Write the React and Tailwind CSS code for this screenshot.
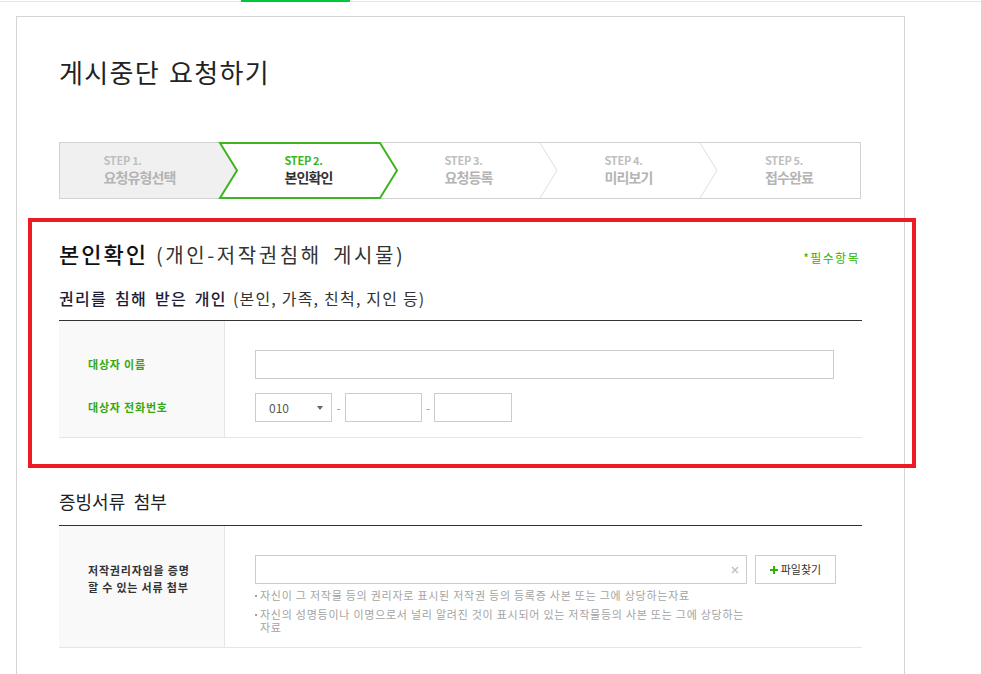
import React from 'react';

const FONT = "font-['Noto_Sans_CJK_KR','Noto_Sans',sans-serif]";

const steps = [
  { no: 'STEP 1.', label: '요청유형선택', w: 'w-[161px]' },
  { no: 'STEP 2.', label: '본인확인', w: 'w-[160px] pl-[17px]', active: true },
  { no: 'STEP 3.', label: '요청등록', w: 'w-[160px] pl-[17px]' },
  { no: 'STEP 4.', label: '미리보기', w: 'w-[160px] pl-[17px]' },
  { no: 'STEP 5.', label: '접수완료', w: 'w-[161px] pl-[17px]' },
];

function StepBar() {
  return (
    <div className="relative h-[57px] w-[802px]">
      {/* chevron drawing behind the labels */}
      <svg className="absolute inset-0" width="802" height="57" viewBox="0 0 802 57">
        <rect x="0.5" y="0.5" width="801" height="56" fill="#fff" stroke="#d2d2d2" />
        <polygon points="1,1 161,1 178,28.5 161,56 1,56" fill="#f0f0f0" />
        <polyline points="481,1 498,28.5 481,56" fill="none" stroke="#dedede" />
        <polyline points="641,1 658,28.5 641,56" fill="none" stroke="#dedede" />
        <polygon
          points="161,1 321,1 338,28.5 321,56 161,56 178,28.5"
          fill="#fff"
          stroke="#3cb521"
          strokeWidth="2"
        />
      </svg>
      <div className="relative flex h-full">
        {steps.map((s) => (
          <div key={s.no} className={`${s.w} flex justify-center pt-[12px]`}>
            <div className="flex flex-col items-start">
              <span
                className={`text-[11px] leading-[13px] font-bold tracking-[-0.3px] ${
                  s.active ? 'text-[#3cb521]' : 'text-[#bfbfbf]'
                }`}
              >
                {s.no}
              </span>
              <span
                className={`mt-[2px] text-[14px] leading-[17px] font-bold tracking-[-0.9px] ${
                  s.active ? 'text-[#333]' : 'text-[#b4b4b4]'
                }`}
              >
                {s.label}
              </span>
            </div>
          </div>
        ))}
      </div>
    </div>
  );
}

function Caret() {
  return (
    <svg width="6" height="4" viewBox="0 0 6 4">
      <polygon points="0,0 6,0 3,4" fill="#666" />
    </svg>
  );
}

function Note({ children }) {
  return (
    <div className="flex w-[495px] text-[11px] leading-[13px] tracking-[0.75px] text-[#a3a3a3]">
      <span className="mr-[3px] mt-[6px] h-[2px] w-[2px] shrink-0 bg-[#a3a3a3]" />
      <p className="w-[490px]">{children}</p>
    </div>
  );
}

export default function App() {
  return (
    <div className={`relative h-[674px] overflow-hidden bg-white ${FONT}`}>
      {/* top nav line with active tab indicator */}
      <div className="relative h-[2px]">
        <div className="absolute left-0 right-0 top-[1px] h-px bg-[#e6e6e6]" />
        <div className="absolute left-[241px] top-0 h-[2px] w-[109px] bg-[#00c73c]" />
      </div>

      <div className="ml-[16px] mt-[14px] w-[889px] border border-[#d5d5d5] px-[42px] pt-[40px] pb-[60px]">
        <h1 className="text-[26px] leading-[30px] font-normal tracking-[1.3px] text-[#222] [word-spacing:2px]">
          게시중단 요청하기
        </h1>

        <div className="mt-[55px]">
          <StepBar />
        </div>

        {/* 본인확인 */}
        <div className="mt-[40px] flex h-[28px] items-end justify-between">
          <h2 className="flex h-[28px] items-baseline">
            <span className="text-[22px] leading-[28px] font-medium tracking-[2px] text-[#111]">본인확인</span>
            <span className="ml-[8px] text-[20px] leading-[28px] tracking-[2.6px] text-[#333] [word-spacing:4px]">
              (개인-저작권침해 게시물)
            </span>
          </h2>
          <span className="mb-px mr-[2px] text-[12px] leading-[16px] tracking-[1.4px] text-[#2db400]">*필수항목</span>
        </div>
        <h3 className="mt-[21px] h-[20px] text-[16px] leading-[20px]">
          <span className="font-medium tracking-[1.3px] text-[#1c1c3a] [word-spacing:3px]">권리를 침해 받은 개인</span>
          <span className="ml-[6px] tracking-[1.2px] text-[#333]">(본인, 가족, 친척, 지인 등)</span>
        </h3>

        <div className="mt-[12px] flex border-t border-b border-t-[#333] border-b-[#e5e5e5]">
          <div className="flex w-[166px] flex-col gap-[14px] border-r border-[#e5e5e5] bg-[#f9f9f9] pl-[29px] pt-[29px] pb-[15px]">
            <div className="flex h-[29px] items-center text-[11px] font-bold tracking-[0.8px] text-[#35a812]">대상자 이름</div>
            <div className="flex h-[29px] items-center text-[11px] font-bold tracking-[0.8px] text-[#35a812]">대상자 전화번호</div>
          </div>
          <div className="flex flex-col gap-[14px] pl-[30px] pt-[29px] pb-[15px]">
            <input
              type="text"
              className="h-[29px] w-[579px] border border-[#cccccc] bg-white outline-none"
            />
            <div className="flex h-[29px] items-center">
              <div className="flex h-[29px] w-[77px] items-center justify-between border border-[#cccccc] pl-[13px] pr-[8px]">
                <span className="text-[12px] text-[#555]">010</span>
                <Caret />
              </div>
              <span className="w-[13px] text-center text-[12px] text-[#999]">-</span>
              <input type="text" className="h-[29px] w-[77px] border border-[#cccccc] outline-none" />
              <span className="w-[12px] text-center text-[12px] text-[#999]">-</span>
              <input type="text" className="h-[29px] w-[78px] border border-[#cccccc] outline-none" />
            </div>
          </div>
        </div>

        {/* 증빙서류 첨부 */}
        <h2 className="mt-[51px] text-[18px] leading-[24px] text-[#222] [word-spacing:0.25em]">증빙서류 첨부</h2>
        <div className="mt-[12px] flex border-t border-b border-t-[#333] border-b-[#e5e5e5]">
          <div className="w-[166px] border-r border-[#e5e5e5] bg-[#f9f9f9] pl-[29px] pt-[36px]">
            <p className="text-[11px] leading-[17px] font-bold tracking-[0.8px] text-[#333]">
              저작권리자임을 증명
              <br />
              할 수 있는 서류 첨부
            </p>
          </div>
          <div className="pl-[30px] pt-[29px] pb-[13px]">
            <div className="flex items-center gap-[8px]">
              <div className="flex h-[29px] w-[492px] items-center justify-end border border-[#cccccc] pr-[7px]">
                <svg width="8" height="8" viewBox="0 0 8 8">
                  <path d="M1 1 L7 7 M7 1 L1 7" stroke="#bbb" strokeWidth="1.2" />
                </svg>
              </div>
              <button
                type="button"
                className="flex h-[29px] w-[81px] items-center justify-center gap-[3px] border border-[#cccccc] bg-white text-[11px] text-[#333]"
              >
                <svg width="8" height="8" viewBox="0 0 8 8">
                  <path d="M4 0 V8 M0 4 H8" stroke="#2db400" strokeWidth="2" />
                </svg>
                파일찾기
              </button>
            </div>
            <div className="mt-[5px]">
              <Note>자신이 그 저작물 등의 권리자로 표시된 저작권 등의 등록증 사본 또는 그에 상당하는자료</Note>
            </div>
            <div className="mt-[6px]">
              <Note>자신의 성명등이나 이명으로서 널리 알려진 것이 표시되어 있는 저작물등의 사본 또는 그에 상당하는 자료</Note>
            </div>
          </div>
        </div>
      </div>

      {/* red annotation frame over the section */}
      <div className="pointer-events-none absolute left-[28px] top-[218px] h-[250px] w-[888px] border-4 border-[#ed1c24]" />
    </div>
  );
}
